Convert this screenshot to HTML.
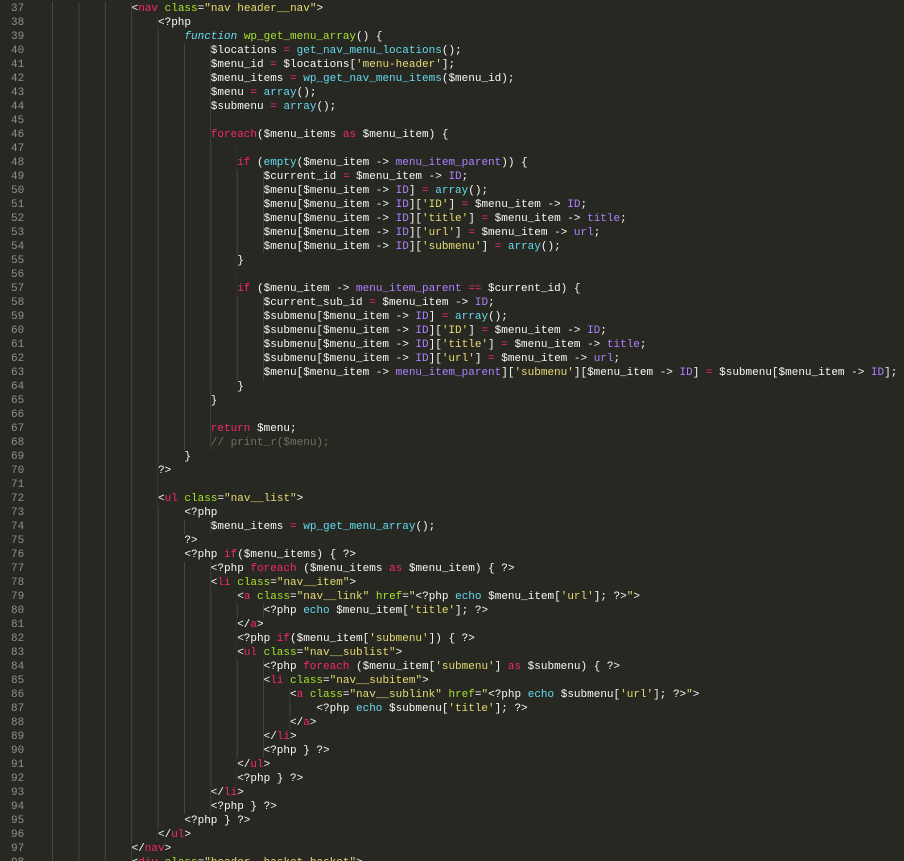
<!DOCTYPE html>
<html><head><meta charset="utf-8">
<style>
html,body{margin:0;padding:0;background:#272822;width:904px;height:861px;overflow:hidden}
#c{padding-top:2px;font-family:"Liberation Mono",monospace;font-size:11px;line-height:14px;color:#f8f8f2}
.l{height:14px;white-space:pre;position:relative}
.n{display:inline-block;width:26px;box-sizing:border-box;padding-left:11px;color:#8f908a;vertical-align:top}
.g{display:inline-block;height:14px;vertical-align:top;box-sizing:border-box;padding-left:26.4px;background:linear-gradient(to right,#47483f 0 1px,transparent 1px);background-size:26.4px 14px;background-origin:content-box;background-clip:content-box}
.k{color:#f92672}.f{color:#66d9ef}.fi{color:#66d9ef;font-style:italic}.s{color:#e6db74}.a{color:#a6e22e}.p{color:#ae81ff}.c{color:#75715e}
</style></head><body><div id="c">
<div class="l"><span class="n">37</span><span class="g" style="width:105.6px"></span>&lt;<span class="k">nav</span> <span class="a">class</span>=<span class="s">"nav header__nav"</span>&gt;</div>
<div class="l"><span class="n">38</span><span class="g" style="width:132px"></span>&lt;?php</div>
<div class="l"><span class="n">39</span><span class="g" style="width:158.4px"></span><span class="fi">function</span> <span class="a">wp_get_menu_array</span>() {</div>
<div class="l"><span class="n">40</span><span class="g" style="width:184.8px"></span>$locations <span class="k">=</span> <span class="f">get_nav_menu_locations</span>();</div>
<div class="l"><span class="n">41</span><span class="g" style="width:184.8px"></span>$menu_id <span class="k">=</span> $locations[<span class="s">'menu-header'</span>];</div>
<div class="l"><span class="n">42</span><span class="g" style="width:184.8px"></span>$menu_items <span class="k">=</span> <span class="f">wp_get_nav_menu_items</span>($menu_id);</div>
<div class="l"><span class="n">43</span><span class="g" style="width:184.8px"></span>$menu <span class="k">=</span> <span class="f">array</span>();</div>
<div class="l"><span class="n">44</span><span class="g" style="width:184.8px"></span>$submenu <span class="k">=</span> <span class="f">array</span>();</div>
<div class="l"><span class="n">45</span><span class="g" style="width:184.8px"></span></div>
<div class="l"><span class="n">46</span><span class="g" style="width:184.8px"></span><span class="k">foreach</span>($menu_items <span class="k">as</span> $menu_item) {</div>
<div class="l"><span class="n">47</span><span class="g" style="width:211.2px"></span></div>
<div class="l"><span class="n">48</span><span class="g" style="width:211.2px"></span><span class="k">if</span> (<span class="f">empty</span>($menu_item -&gt; <span class="p">menu_item_parent</span>)) {</div>
<div class="l"><span class="n">49</span><span class="g" style="width:237.6px"></span>$current_id <span class="k">=</span> $menu_item -&gt; <span class="p">ID</span>;</div>
<div class="l"><span class="n">50</span><span class="g" style="width:237.6px"></span>$menu[$menu_item -&gt; <span class="p">ID</span>] <span class="k">=</span> <span class="f">array</span>();</div>
<div class="l"><span class="n">51</span><span class="g" style="width:237.6px"></span>$menu[$menu_item -&gt; <span class="p">ID</span>][<span class="s">'ID'</span>] <span class="k">=</span> $menu_item -&gt; <span class="p">ID</span>;</div>
<div class="l"><span class="n">52</span><span class="g" style="width:237.6px"></span>$menu[$menu_item -&gt; <span class="p">ID</span>][<span class="s">'title'</span>] <span class="k">=</span> $menu_item -&gt; <span class="p">title</span>;</div>
<div class="l"><span class="n">53</span><span class="g" style="width:237.6px"></span>$menu[$menu_item -&gt; <span class="p">ID</span>][<span class="s">'url'</span>] <span class="k">=</span> $menu_item -&gt; <span class="p">url</span>;</div>
<div class="l"><span class="n">54</span><span class="g" style="width:237.6px"></span>$menu[$menu_item -&gt; <span class="p">ID</span>][<span class="s">'submenu'</span>] <span class="k">=</span> <span class="f">array</span>();</div>
<div class="l"><span class="n">55</span><span class="g" style="width:211.2px"></span>}</div>
<div class="l"><span class="n">56</span><span class="g" style="width:211.2px"></span></div>
<div class="l"><span class="n">57</span><span class="g" style="width:211.2px"></span><span class="k">if</span> ($menu_item -&gt; <span class="p">menu_item_parent</span> <span class="k">==</span> $current_id) {</div>
<div class="l"><span class="n">58</span><span class="g" style="width:237.6px"></span>$current_sub_id <span class="k">=</span> $menu_item -&gt; <span class="p">ID</span>;</div>
<div class="l"><span class="n">59</span><span class="g" style="width:237.6px"></span>$submenu[$menu_item -&gt; <span class="p">ID</span>] <span class="k">=</span> <span class="f">array</span>();</div>
<div class="l"><span class="n">60</span><span class="g" style="width:237.6px"></span>$submenu[$menu_item -&gt; <span class="p">ID</span>][<span class="s">'ID'</span>] <span class="k">=</span> $menu_item -&gt; <span class="p">ID</span>;</div>
<div class="l"><span class="n">61</span><span class="g" style="width:237.6px"></span>$submenu[$menu_item -&gt; <span class="p">ID</span>][<span class="s">'title'</span>] <span class="k">=</span> $menu_item -&gt; <span class="p">title</span>;</div>
<div class="l"><span class="n">62</span><span class="g" style="width:237.6px"></span>$submenu[$menu_item -&gt; <span class="p">ID</span>][<span class="s">'url'</span>] <span class="k">=</span> $menu_item -&gt; <span class="p">url</span>;</div>
<div class="l"><span class="n">63</span><span class="g" style="width:237.6px"></span>$menu[$menu_item -&gt; <span class="p">menu_item_parent</span>][<span class="s">'submenu'</span>][$menu_item -&gt; <span class="p">ID</span>] <span class="k">=</span> $submenu[$menu_item -&gt; <span class="p">ID</span>];</div>
<div class="l"><span class="n">64</span><span class="g" style="width:211.2px"></span>}</div>
<div class="l"><span class="n">65</span><span class="g" style="width:184.8px"></span>}</div>
<div class="l"><span class="n">66</span><span class="g" style="width:184.8px"></span></div>
<div class="l"><span class="n">67</span><span class="g" style="width:184.8px"></span><span class="k">return</span> $menu;</div>
<div class="l"><span class="n">68</span><span class="g" style="width:184.8px"></span><span class="c">// print_r($menu);</span></div>
<div class="l"><span class="n">69</span><span class="g" style="width:158.4px"></span>}</div>
<div class="l"><span class="n">70</span><span class="g" style="width:132px"></span>?&gt;</div>
<div class="l"><span class="n">71</span><span class="g" style="width:132px"></span></div>
<div class="l"><span class="n">72</span><span class="g" style="width:132px"></span>&lt;<span class="k">ul</span> <span class="a">class</span>=<span class="s">"nav__list"</span>&gt;</div>
<div class="l"><span class="n">73</span><span class="g" style="width:158.4px"></span>&lt;?php</div>
<div class="l"><span class="n">74</span><span class="g" style="width:184.8px"></span>$menu_items <span class="k">=</span> <span class="f">wp_get_menu_array</span>();</div>
<div class="l"><span class="n">75</span><span class="g" style="width:158.4px"></span>?&gt;</div>
<div class="l"><span class="n">76</span><span class="g" style="width:158.4px"></span>&lt;?php <span class="k">if</span>($menu_items) { ?&gt;</div>
<div class="l"><span class="n">77</span><span class="g" style="width:184.8px"></span>&lt;?php <span class="k">foreach</span> ($menu_items <span class="k">as</span> $menu_item) { ?&gt;</div>
<div class="l"><span class="n">78</span><span class="g" style="width:184.8px"></span>&lt;<span class="k">li</span> <span class="a">class</span>=<span class="s">"nav__item"</span>&gt;</div>
<div class="l"><span class="n">79</span><span class="g" style="width:211.2px"></span>&lt;<span class="k">a</span> <span class="a">class</span>=<span class="s">"nav__link"</span> <span class="a">href</span>=<span class="s">"</span>&lt;?php <span class="f">echo</span> $menu_item[<span class="s">'url'</span>]; ?&gt;<span class="s">"</span>&gt;</div>
<div class="l"><span class="n">80</span><span class="g" style="width:237.6px"></span>&lt;?php <span class="f">echo</span> $menu_item[<span class="s">'title'</span>]; ?&gt;</div>
<div class="l"><span class="n">81</span><span class="g" style="width:211.2px"></span>&lt;/<span class="k">a</span>&gt;</div>
<div class="l"><span class="n">82</span><span class="g" style="width:211.2px"></span>&lt;?php <span class="k">if</span>($menu_item[<span class="s">'submenu'</span>]) { ?&gt;</div>
<div class="l"><span class="n">83</span><span class="g" style="width:211.2px"></span>&lt;<span class="k">ul</span> <span class="a">class</span>=<span class="s">"nav__sublist"</span>&gt;</div>
<div class="l"><span class="n">84</span><span class="g" style="width:237.6px"></span>&lt;?php <span class="k">foreach</span> ($menu_item[<span class="s">'submenu'</span>] <span class="k">as</span> $submenu) { ?&gt;</div>
<div class="l"><span class="n">85</span><span class="g" style="width:237.6px"></span>&lt;<span class="k">li</span> <span class="a">class</span>=<span class="s">"nav__subitem"</span>&gt;</div>
<div class="l"><span class="n">86</span><span class="g" style="width:264px"></span>&lt;<span class="k">a</span> <span class="a">class</span>=<span class="s">"nav__sublink"</span> <span class="a">href</span>=<span class="s">"</span>&lt;?php <span class="f">echo</span> $submenu[<span class="s">'url'</span>]; ?&gt;<span class="s">"</span>&gt;</div>
<div class="l"><span class="n">87</span><span class="g" style="width:290.4px"></span>&lt;?php <span class="f">echo</span> $submenu[<span class="s">'title'</span>]; ?&gt;</div>
<div class="l"><span class="n">88</span><span class="g" style="width:264px"></span>&lt;/<span class="k">a</span>&gt;</div>
<div class="l"><span class="n">89</span><span class="g" style="width:237.6px"></span>&lt;/<span class="k">li</span>&gt;</div>
<div class="l"><span class="n">90</span><span class="g" style="width:237.6px"></span>&lt;?php } ?&gt;</div>
<div class="l"><span class="n">91</span><span class="g" style="width:211.2px"></span>&lt;/<span class="k">ul</span>&gt;</div>
<div class="l"><span class="n">92</span><span class="g" style="width:211.2px"></span>&lt;?php } ?&gt;</div>
<div class="l"><span class="n">93</span><span class="g" style="width:184.8px"></span>&lt;/<span class="k">li</span>&gt;</div>
<div class="l"><span class="n">94</span><span class="g" style="width:184.8px"></span>&lt;?php } ?&gt;</div>
<div class="l"><span class="n">95</span><span class="g" style="width:158.4px"></span>&lt;?php } ?&gt;</div>
<div class="l"><span class="n">96</span><span class="g" style="width:132px"></span>&lt;/<span class="k">ul</span>&gt;</div>
<div class="l"><span class="n">97</span><span class="g" style="width:105.6px"></span>&lt;/<span class="k">nav</span>&gt;</div>
<div class="l"><span class="n">98</span><span class="g" style="width:105.6px"></span>&lt;<span class="k">div</span> <span class="a">class</span>=<span class="s">"header__basket basket"</span>&gt;</div>
</div></body></html>
